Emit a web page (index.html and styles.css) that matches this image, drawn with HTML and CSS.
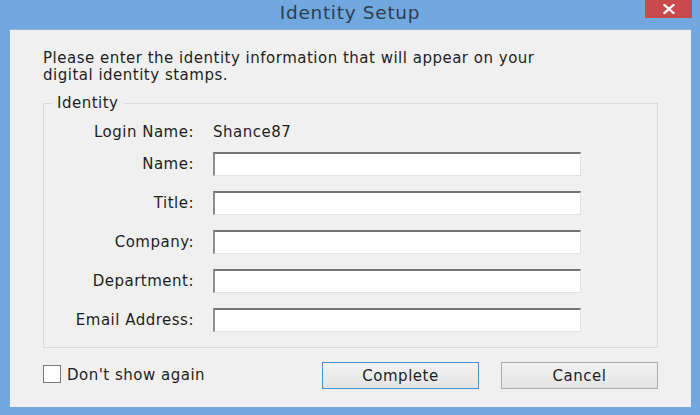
FILE: index.html
```html
<!DOCTYPE html>
<html>
<head>
<meta charset="utf-8">
<link rel="stylesheet" href="styles.css">
</head>
<body>
<div class="window">
  <div class="titlebar">
    <span class="title">Identity Setup</span>
    <div class="close" aria-label="Close">
      <svg width="12" height="10" viewBox="0 0 12 10"><path d="M1.5 1 L10.5 9 M10.5 1 L1.5 9" stroke="#fff" stroke-width="2.2" stroke-linecap="square"/></svg>
    </div>
  </div>
  <div class="client">
    <p class="intro">Please enter the identity information that will appear on your<br>digital identity stamps.</p>
    <fieldset class="group">
      <legend class="legend">Identity</legend>
      <div class="rows">
        <div class="row row-login"><span class="label">Login Name:</span><span class="value">Shance87</span></div>
        <div class="row"><span class="label">Name:</span><input class="field" type="text"></div>
        <div class="row"><span class="label">Title:</span><input class="field" type="text"></div>
        <div class="row"><span class="label">Company:</span><input class="field" type="text"></div>
        <div class="row"><span class="label">Department:</span><input class="field" type="text"></div>
        <div class="row"><span class="label">Email Address:</span><input class="field" type="text"></div>
      </div>
    </fieldset>
    <div class="footer">
      <label class="check"><span class="box"></span><span class="check-text">Don't show again</span></label>
      <div class="buttons">
        <button class="btn btn-default">Complete</button>
        <button class="btn">Cancel</button>
      </div>
    </div>
  </div>
</div>
</body>
</html>
```
FILE: styles.css
```css
html, body {
  margin: 0;
  padding: 0;
}
body {
  width: 700px;
  height: 415px;
  overflow: hidden;
  background: #70a8df;
  font-family: "DejaVu Sans", "Open Sans", sans-serif;
  color: #1e1e1e;
  letter-spacing: 0.5px;
}
.window {
  display: flex;
  flex-direction: column;
  height: 415px;
}
.titlebar {
  position: relative;
  height: 29px;
  display: flex;
  align-items: center;
  justify-content: center;
}
.title {
  font-size: 18.5px;
  letter-spacing: 0.7px;
  color: #2f3d4c;
  margin-top: -4px;
}
.close {
  position: absolute;
  top: 0;
  right: 8px;
  width: 47px;
  height: 18px;
  background: #c9494d;
  display: flex;
  align-items: center;
  justify-content: center;
}
.client {
  margin: 0 9px 8px 10px;
  flex: 1;
  background: #f0f0f0;
  border-top: 1px solid #8fb6dc;
  padding: 0 33px 0 33px;
  display: flex;
  flex-direction: column;
}
.intro {
  margin: 20px 0 0 0;
  font-size: 15px;
  line-height: 17px;
}
.group {
  margin: 10px 0 0 0;
  border: 1px solid #dadada;
  padding: 0 0 13px 0;
  height: 254px;
  box-sizing: border-box;
}
.legend {
  margin-left: 8px;
  padding: 0 5px;
  font-size: 15px;
  line-height: 19px;
}
.rows {
  display: flex;
  flex-direction: column;
  gap: 14.5px;
}
.row {
  display: grid;
  grid-template-columns: 150px 368px;
  column-gap: 19px;
  align-items: center;
  font-size: 15px;
}
.row-login {
  height: 20px;
  margin-top: 9px;
  margin-bottom: -5px;
}
.label {
  text-align: right;
}
.field {
  box-sizing: border-box;
  width: 368px;
  height: 24.5px;
  margin: 0;
  background: #fff;
  border-top: 2px solid #747474;
  border-left: 2px solid #8c8c8c;
  border-right: 1px solid #e2e2e2;
  border-bottom: 1px solid #e2e2e2;
  outline: none;
}
.footer {
  margin-top: 14px;
  display: flex;
  justify-content: space-between;
  align-items: flex-start;
}
.check {
  display: flex;
  align-items: center;
  gap: 6px;
  font-size: 15px;
  margin-top: 1px;
}
.check-text {
  padding-top: 3px;
}
.box {
  width: 18px;
  height: 18px;
  background: #fff;
  border: 1px solid #7a7a7a;
  box-sizing: border-box;
  display: inline-block;
}
.buttons {
  display: flex;
  gap: 22px;
}
.btn {
  width: 157px;
  height: 27px;
  box-sizing: border-box;
  border: 1px solid #acacac;
  background: linear-gradient(#f2f2f2, #e4e4e4);
  font-family: "DejaVu Sans", "Open Sans", sans-serif;
  font-size: 15px;
  letter-spacing: 0.5px;
  color: #1e1e1e;
  padding: 0;
}
.btn-default {
  border: 1px solid #4a90d6;
}
```
